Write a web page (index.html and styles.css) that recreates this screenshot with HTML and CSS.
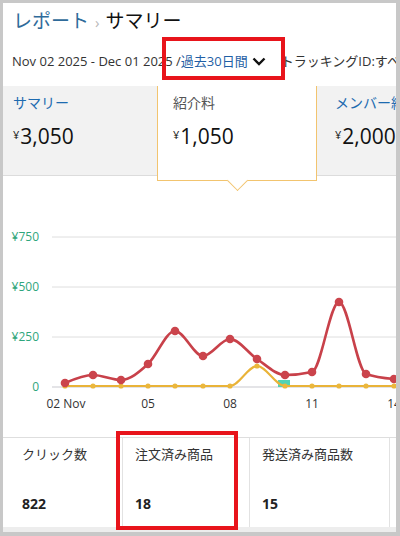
FILE: index.html
```html
<!DOCTYPE html>
<html lang="ja">
<head>
<meta charset="utf-8">
<title>レポート サマリー</title>
<link rel="stylesheet" href="styles.css">
</head>
<body>
<div class="frame">
  <h1 class="title"><span class="crumb">レポート</span><span class="sep">›</span><span class="current">サマリー</span></h1>
  <div class="dates">
    <span class="range">Nov 02 2025 - Dec 01 2025 /</span><span class="period">過去30日間</span><svg class="chev" width="14" height="9" viewBox="0 0 14 9"><polyline points="1.5,1.5 7,7 12.5,1.5" fill="none" stroke="#111" stroke-width="2.4"/></svg><span class="tracking">トラッキングID:すべて</span>
  </div>
  <div class="cards">
    <div class="card card-first">
      <div class="card-label link">サマリー</div>
      <div class="card-value"><sup>¥</sup>3,050</div>
    </div>
    <div class="card card-active">
      <div class="card-label">紹介料</div>
      <div class="card-value"><sup>¥</sup>1,050</div>
    </div>
    <div class="card card-last">
      <div class="card-label link">メンバー紹介料</div>
      <div class="card-value"><sup>¥</sup>2,000</div>
    </div>
  </div>
  <svg class="chart" width="394" height="261" viewBox="3 173 394 261">
    <g class="grid">
      <line x1="52" y1="234" x2="397" y2="234"/>
      <line x1="52" y1="284" x2="397" y2="284"/>
      <line x1="52" y1="334" x2="397" y2="334"/>
    </g>
    <line class="base" x1="52" y1="384" x2="397" y2="384"/>
    <g class="ylab">
      <text x="39" y="238" text-anchor="end">¥750</text>
      <text x="39" y="288" text-anchor="end">¥500</text>
      <text x="39" y="338" text-anchor="end">¥250</text>
      <text x="39" y="388" text-anchor="end">0</text>
    </g>
    <g class="xlab">
      <text x="66" y="405" text-anchor="middle">02 Nov</text>
      <text x="148" y="405" text-anchor="middle">05</text>
      <text x="230" y="405" text-anchor="middle">08</text>
      <text x="312" y="405" text-anchor="middle">11</text>
      <text x="394" y="405" text-anchor="middle">14</text>
    </g>
    <rect class="bar" x="278" y="377" width="12" height="7"/>
    <path class="line-yellow" d="M65,383 L230,383 C239,383 248,363 257,363 C266.3,363 275.7,383 285,383 L394,383"/>
    <g class="dots-yellow">
      <circle cx="65" cy="383" r="2.6"/><circle cx="93" cy="383" r="2.6"/><circle cx="121" cy="383" r="2.6"/>
      <circle cx="148" cy="383" r="2.6"/><circle cx="175" cy="383" r="2.6"/><circle cx="203" cy="383" r="2.6"/>
      <circle cx="230" cy="383" r="2.6"/><circle cx="257" cy="363" r="2.6"/><circle cx="285" cy="383" r="2.6"/>
      <circle cx="312" cy="383" r="2.6"/><circle cx="339" cy="383" r="2.6"/><circle cx="366" cy="383" r="2.6"/>
      <circle cx="394" cy="383" r="2.6"/>
    </g>
    <path class="line-red" d="M65,380 C74.3,376 83.7,372 93,372 C102.3,372 111.7,377 121,377 C130,377 139,369.2 148,361 C157,352.8 166,328 175,328 C184.3,328 193.7,353 203,353 C212,353 221,336 230,336 C239,336 248,350.1 257,356 C266.3,362.1 275.7,372 285,372 C294,372 303,371 312,369 C321,367 330,299 339,299 C348,299 357,367.8 366,371 C375.3,374.3 384.7,375.2 394,376"/>
    <g class="dots-red">
      <circle cx="65" cy="380" r="4.3"/><circle cx="93" cy="372" r="4.3"/><circle cx="121" cy="377" r="4.3"/>
      <circle cx="148" cy="361" r="4.3"/><circle cx="175" cy="328" r="4.3"/><circle cx="203" cy="353" r="4.3"/>
      <circle cx="230" cy="336" r="4.3"/><circle cx="257" cy="356" r="4.3"/><circle cx="285" cy="372" r="4.3"/>
      <circle cx="312" cy="369" r="4.3"/><circle cx="339" cy="299" r="4.3"/><circle cx="366" cy="371" r="4.3"/>
      <circle cx="394" cy="376" r="4.3"/>
    </g>
  </svg>
  <div class="metrics">
    <div class="metric metric-first">
      <div class="metric-label">クリック数</div>
      <div class="metric-value">822</div>
    </div>
    <div class="metric">
      <div class="metric-label">注文済み商品</div>
      <div class="metric-value">18</div>
    </div>
    <div class="metric metric-wide">
      <div class="metric-label">発送済み商品数</div>
      <div class="metric-value">15</div>
    </div>
    <div class="metric metric-rest"></div>
  </div>
  <div class="mark mark-period"></div>
  <div class="mark mark-orders"></div>
</div>
</body>
</html>
```

FILE: styles.css
```css
* { box-sizing: border-box; }
html, body { margin: 0; padding: 0; background: #c8c8c8; }
body { font-family: "Open Sans", "Noto Sans CJK JP", sans-serif; color: #222; }

.frame {
  position: relative;
  width: 400px;
  height: 536px;
  overflow: hidden;
  background: #ededed;
  border: 3px solid #c8c8c8;
  border-right-width: 4px;
  border-bottom-width: 4px;
}

.title {
  margin: 0;
  padding: 5px 0 0 10px;
  height: 33px;
  background: #fff;
  font-size: 19px;
  font-weight: normal;
  line-height: 26px;
  white-space: nowrap;
}
.crumb { color: #2f6b9a; }
.sep { color: #b8b8b8; font-size: 15px; margin: 0 6px 0 6px; }
.current { color: #111; }

.dates {
  display: flex;
  align-items: center;
  height: 50px;
  padding: 15px 0 15px 9px;
  background: #fff;
  font-size: 13px;
  line-height: 20px;
  color: #333;
  white-space: nowrap;
}
.period { color: #1f5fa5; }
.chev { margin: 0 15px 0 4px; flex-shrink: 0; }
.tracking { color: #333; }

.cards {
  display: flex;
  height: 90px;
  background: #fff;
  position: relative;
  z-index: 2;
}
.card {
  flex-shrink: 0;
  height: 90px;
  background: #f2f2f2;
  border-bottom: 1px solid #dcdcdc;
  padding-top: 7px;
}
.card-first { width: 154px; padding-left: 10px; }
.card-last { width: 200px; padding-left: 18px; }
.card-active {
  position: relative;
  width: 160px;
  height: 95px;
  background: #fff;
  border: 1px solid #f2c46f;
  border-top: none;
  padding-left: 15px;
}
.card-active::after {
  content: "";
  position: absolute;
  left: 72px;
  bottom: -8px;
  width: 14px;
  height: 14px;
  background: #fff;
  border-right: 1px solid #f2c46f;
  border-bottom: 1px solid #f2c46f;
  transform: rotate(45deg);
}
.card-label {
  font-size: 14px;
  line-height: 20px;
  color: #555;
  white-space: nowrap;
}
.card-label.link { color: #1d6bb0; }
.card-value {
  margin-top: 9px;
  font-size: 21px;
  line-height: 28px;
  color: #111;
  white-space: nowrap;
}
.card-value sup {
  font-size: 11px;
  vertical-align: top;
  position: relative;
  top: -1px;
  margin-right: 1px;
}

.chart {
  display: block;
  background: #fff;
}
.grid line { stroke: #dedede; stroke-width: 1; }
.base { stroke: #c9c9cf; stroke-width: 1; }
.ylab text { font-family: "Open Sans", sans-serif; font-size: 12px; fill: #2fa67c; }
.xlab text { font-family: "Open Sans", sans-serif; font-size: 12px; fill: #333; }
.bar { fill: #52d3b4; }
.line-yellow { fill: none; stroke: #e9b338; stroke-width: 2; }
.dots-yellow circle { fill: #ebb73c; }
.line-red { fill: none; stroke: #c8414a; stroke-width: 2.6; }
.dots-red circle { fill: #cb444c; }

.metrics {
  display: flex;
  height: 90px;
  background: #fff;
  border-top: 1px solid #dedede;
}
.metric {
  flex-shrink: 0;
  width: 127px;
  padding: 5px 0 0 12px;
  border-right: 1px solid #e2e2e2;
}
.metric-first { width: 120px; padding-left: 19px; }
.metric-wide { width: 140px; }
.metric-rest { width: 20px; border-right: none; }
.metric-label {
  font-size: 13px;
  line-height: 22px;
  color: #333;
  white-space: nowrap;
}
.metric-value {
  margin-top: 28px;
  font-size: 14px;
  font-weight: bold;
  line-height: 22px;
  color: #222;
}

.mark {
  position: absolute;
  border: 4px solid #e8141b;
  z-index: 5;
}
.mark-period { left: 159px; top: 34px; width: 123px; height: 43px; }
.mark-orders { left: 113px; top: 428px; width: 122px; height: 99px; }
```
